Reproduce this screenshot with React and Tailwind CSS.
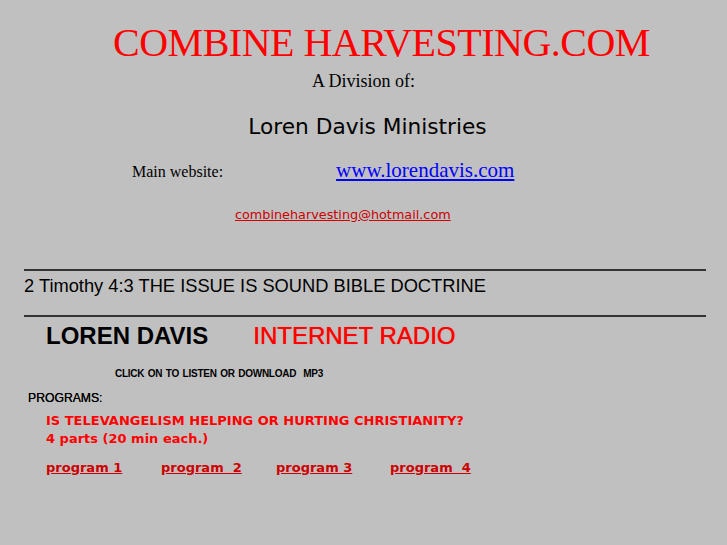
export default function App() {
  return (
    <div className="min-h-[545px] w-full bg-[#c0c0c0] text-black overflow-hidden">
      {/* masthead */}
      <div className="pt-[19px] pl-[113px]">
        <h1 className="text-[40px] leading-[48px] text-[#ff0000] font-['Liberation_Serif',serif] tracking-[-0.5px] whitespace-nowrap">
          COMBINE HARVESTING.COM
        </h1>
      </div>
      <p className="text-center text-[18px] leading-[22px] mt-[3px] font-['Liberation_Serif',serif]">
        A Division of:
      </p>
      <p className="text-center pl-[8px] text-[21.7px] leading-[26px] mt-[22px] font-['DejaVu_Sans',sans-serif]">
        Loren Davis Ministries
      </p>
      <div className="flex items-baseline mt-[15px] font-['Liberation_Serif',serif]">
        <span className="ml-[132px] text-[16px]">Main website:</span>
        <a href="#" className="ml-[113px] text-[21px] text-[#0000ff] underline">
          www.lorendavis.com
        </a>
      </div>
      <p className="ml-[235px] mt-[20px] font-['DejaVu_Sans',sans-serif] text-[12.8px] leading-[16px]">
        <a href="#" className="text-[#cc0000] underline">combineharvesting@hotmail.com</a>
      </p>

      {/* verse */}
      <div className="ml-[24px] mr-[21px] mt-[46px] border-t-2 border-[#333333]" />
      <p className="ml-[24px] mt-[4px] text-[18.3px] leading-[22px] font-['Liberation_Sans',sans-serif]">
        2 Timothy 4:3 THE ISSUE IS SOUND BIBLE DOCTRINE
      </p>
      <div className="ml-[24px] mr-[21px] mt-[18px] border-t-2 border-[#333333]" />

      {/* radio */}
      <div className="flex items-baseline mt-[4px] ml-[46px] font-['Liberation_Sans',sans-serif] text-[24px] leading-[30px]">
        <span className="font-bold">LOREN DAVIS</span>
        <span className="ml-[45px] text-[#ff0000] [text-shadow:0_0_0.7px_#ff0000]">INTERNET RADIO</span>
      </div>
      <p className="ml-[115px] mt-[17px] text-[10px] leading-[12px] font-bold font-['Liberation_Sans',sans-serif] tracking-[-0.25px] [word-spacing:1px] whitespace-pre">
        CLICK ON TO LISTEN OR DOWNLOAD  MP3
      </p>
      <p className="ml-[28px] mt-[11px] text-[12.2px] leading-[14px] font-['Liberation_Sans',sans-serif] [text-shadow:0_0_0.5px_#000]">
        PROGRAMS:
      </p>
      <div className="ml-[46px] mt-[7px] text-[13px] leading-[18px] font-bold text-[#ff0000] font-['DejaVu_Sans',sans-serif]">
        <p>IS TELEVANGELISM HELPING OR HURTING CHRISTIANITY?</p>
        <p>4 parts (20 min each.)</p>
      </div>
      <div className="flex ml-[46px] mt-[11px] text-[13px] leading-[18px] font-bold font-['DejaVu_Sans',sans-serif] whitespace-pre">
        <a href="#" className="w-[115px] text-[#cc0000]"><span className="underline">program 1</span></a>
        <a href="#" className="w-[115px] text-[#cc0000]"><span className="underline">program  2</span></a>
        <a href="#" className="w-[114px] text-[#cc0000]"><span className="underline">program 3</span></a>
        <a href="#" className="text-[#cc0000]"><span className="underline">program  4</span></a>
      </div>
    </div>
  );
}
